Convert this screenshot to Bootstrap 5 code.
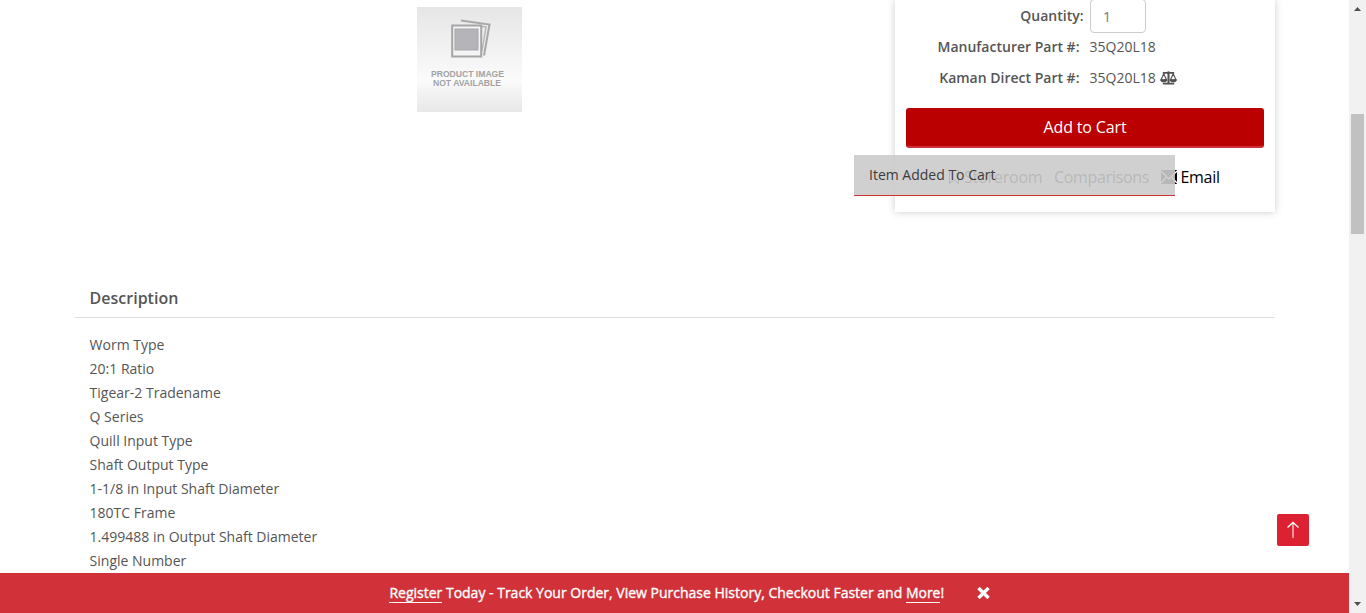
<!DOCTYPE html>
<html lang="en">
<head>
<meta charset="utf-8">
<meta name="viewport" content="width=device-width, initial-scale=1">
<title>35Q20L18</title>
<link href="https://cdn.jsdelivr.net/npm/bootstrap@5.3.0/dist/css/bootstrap.min.css" rel="stylesheet">
<style>
body{font-family:"Open Sans",sans-serif;font-size:14px;line-height:24px;color:#555;background:#fff}
.page-frame{height:613px}
.page-main{height:573px}
.wrap{width:1200px;margin-left:75px}
.top-row{height:278px}
.photo{width:105px;height:105px;margin:7px 0 0 342px}
.buy{width:380px;height:212px;padding:0 11px;box-shadow:0 0 8px rgba(0,0,0,.2);clip-path:inset(0 -12px -12px -12px)}
.spec{height:31px}
.spec-label{width:184px;padding-right:10.500px;font-weight:600;text-align:right;white-space:nowrap}
.spec-value{margin-left:-.5px}
.qty-label{padding-right:6.500px}
.qty{width:56px;height:34px;border:1px solid #ccc;border-radius:4px;padding:0 12px;font-size:14px;color:#777;margin-top:1px}
.btn-cart{height:40px;margin-top:15px;background:#ba0000;border:0;border-bottom:2px solid #d0303a;border-radius:3px;color:#fff;font-size:16px;letter-spacing:-.15px;line-height:24px;padding:0}
.btn-cart:hover{background:#a80000;color:#fff}
.actions{font-size:16px;margin:17px 0 0 42px;height:24px;white-space:nowrap}
.actions a{color:#000}
.store{width:78px;margin-left:4px;letter-spacing:-.2px}
.compare{width:95px;margin-left:12px;letter-spacing:-.3px}
.email{margin-left:3.500px;letter-spacing:-.3px}
.mail-icon{margin-left:12px}
.notice{left:854px;top:155px;width:320.500px;height:41px;background:rgba(203,203,203,.9);border-bottom:1px solid #d0303a;padding:8px 15px;line-height:24px;color:#3c3c3c}
.desc-title{height:40px;padding:0 14.600px;font-size:16px;font-weight:600;line-height:40px;border-bottom:1px solid #ddd}
.desc-list{padding:15px 14.600px 0}
.to-top{left:1277px;top:514px;width:32px;height:32px;background:#dc2232;border-radius:2px}
.promo{height:40px;background:#d13239;color:#fff;font-size:14px;padding-left:389.400px;line-height:20px;-webkit-text-stroke:.35px #fff}
.promo a{color:#fff;border-bottom:1px solid #fff}
.promo-text{width:555px}
.close-icon{margin-left:33px}
.rail{width:17px;background:#f1f1f1}
.thumb{width:13px;height:120px;margin:98px 0 0 2px;background:#c1c1c1}
svg{display:block;flex:none}
</style>
</head>
<body class="overflow-hidden">
<div class="page-frame d-flex position-relative">
  <div class="flex-grow-1">
    <main class="page-main overflow-hidden">
      <div class="wrap">
        <div class="top-row d-flex justify-content-between">
          <svg class="photo" viewBox="0 0 105 105">
            <defs><linearGradient id="paper" x1="0" y1="0" x2="0" y2="1"><stop stop-color="#e6e6e6"/><stop offset=".35" stop-color="#f0f0f0"/><stop offset=".7" stop-color="#fbfbfb"/><stop offset=".82" stop-color="#f2f2f2"/><stop offset="1" stop-color="#e8e8e8"/></linearGradient></defs>
            <rect width="105" height="105" fill="url(#paper)"/>
            <path d="M44 13.500 72.500 17.500 67 48.500" fill="none" stroke="#a8a8aa" stroke-width="2"/>
            <path d="M43 16 70 19 65 49H45z" fill="#eee"/>
            <path d="M64 19.500 69 20 65 44" fill="none" stroke="#b6b6b8" stroke-width="1.500"/>
            <rect x="35.200" y="18.500" width="29" height="31" fill="#f4f4f4" stroke="#a5a5a7" stroke-width="2"/>
            <rect x="38" y="22" width="23" height="21" fill="#b4b4b9" stroke="#a8a8ac"/>
            <g font-family="Liberation Sans,sans-serif" font-weight="bold" font-size="8.500" fill="#a2a2a5"><text x="14" y="70" textLength="73" lengthAdjust="spacingAndGlyphs">PRODUCT IMAGE</text><text x="16" y="79.300" textLength="68" lengthAdjust="spacingAndGlyphs">NOT AVAILABLE</text></g>
          </svg>
          <section class="buy">
            <div class="spec d-flex align-items-center"><label class="spec-label qty-label" for="qty">Quantity:</label><input class="qty" id="qty" value="1"></div>
            <div class="spec d-flex align-items-center"><span class="spec-label">Manufacturer Part #:</span><span class="spec-value">35Q20L18</span></div>
            <div class="spec d-flex align-items-center"><span class="spec-label">Kaman Direct Part #:</span><span class="spec-value">35Q20L18</span>
              <svg class="ms-1" width="17" height="14" viewBox="0 0 18 14" fill="none" stroke="#505050"><path d="M3 1.500h12M3 13h12" stroke-width="1.900"/><path d="M9 0v13" stroke-width="2.200"/><path d="M4 2.500 1 9h6zM14 2.500 11 9h6z" stroke-width="1.200"/><path d="M.2 8.500h7.600q-.5 3-3.800 3T.2 8.500M10.200 8.500h7.600q-.5 3-3.800 3t-3.800-3" fill="#505050" stroke="none"/></svg></div>
            <button class="btn btn-cart w-100 d-block">Add to Cart</button>
            <div class="actions d-flex align-items-center">
              <svg width="12" height="15" viewBox="0 0 12 15" fill="none" stroke="#000"><path d="M1.500.5h9v13L6 9.500l-4.500 4z"/></svg>
              <a class="text-decoration-none store" href="#">Storeroom</a>
              <a class="text-decoration-none compare" href="#">Comparisons</a>
              <svg class="mail-icon" width="16" height="14" viewBox="0 0 16 14"><path d="M0 0h16v14H0z"/><path d="m0 1 8 8 8-8M0 13l5.500-6M16 13l-5.500-6" fill="none" stroke="#fff" stroke-width="1.400"/></svg>
              <a class="text-decoration-none email" href="#">Email</a>
            </div>
          </section>
        </div>
        <h2 class="desc-title m-0">Description</h2>
        <ul class="desc-list list-unstyled m-0">
          <li>Worm Type</li><li>20:1 Ratio</li><li>Tigear-2 Tradename</li><li>Q Series</li><li>Quill Input Type</li><li>Shaft Output Type</li><li>1-1/8 in Input Shaft Diameter</li><li>180TC Frame</li><li>1.499488 in Output Shaft Diameter</li><li>Single Number</li>
        </ul>
      </div>
    </main>
    <footer class="promo d-flex align-items-center">
      <span class="promo-text text-nowrap"><a class="text-decoration-none" href="#">Register</a> Today - Track Your Order, View Purchase History, Checkout Faster and <a class="text-decoration-none" href="#">More</a>!</span>
      <svg class="close-icon" width="13" height="12" viewBox="0 0 13 12"><path d="m1.500 1 10 10m0-10-10 10" stroke="#fff" stroke-width="3.400"/></svg>
    </footer>
  </div>
  <div class="rail d-flex flex-column align-items-start">
    <svg width="17" height="16"><path d="M5 11h7L8.500 7z" fill="#505050"/></svg>
    <div class="thumb"></div>
    <svg class="mt-auto" width="17" height="16"><path d="M5 5h7L8.500 9z" fill="#505050"/></svg>
  </div>
  <div class="notice position-absolute">Item Added To Cart</div>
  <a class="to-top position-absolute" href="#" aria-label="Back to top"><svg width="32" height="32" fill="none" stroke="#fff"><path d="m10.500 13.500 5.500-5 5.500 5" stroke-width="1.300"/><path d="M16 9v15" stroke-width="1.500" opacity=".7"/></svg></a>
</div>
<script src="https://cdn.jsdelivr.net/npm/bootstrap@5.3.0/dist/js/bootstrap.bundle.min.js"></script>
</body>
</html>
